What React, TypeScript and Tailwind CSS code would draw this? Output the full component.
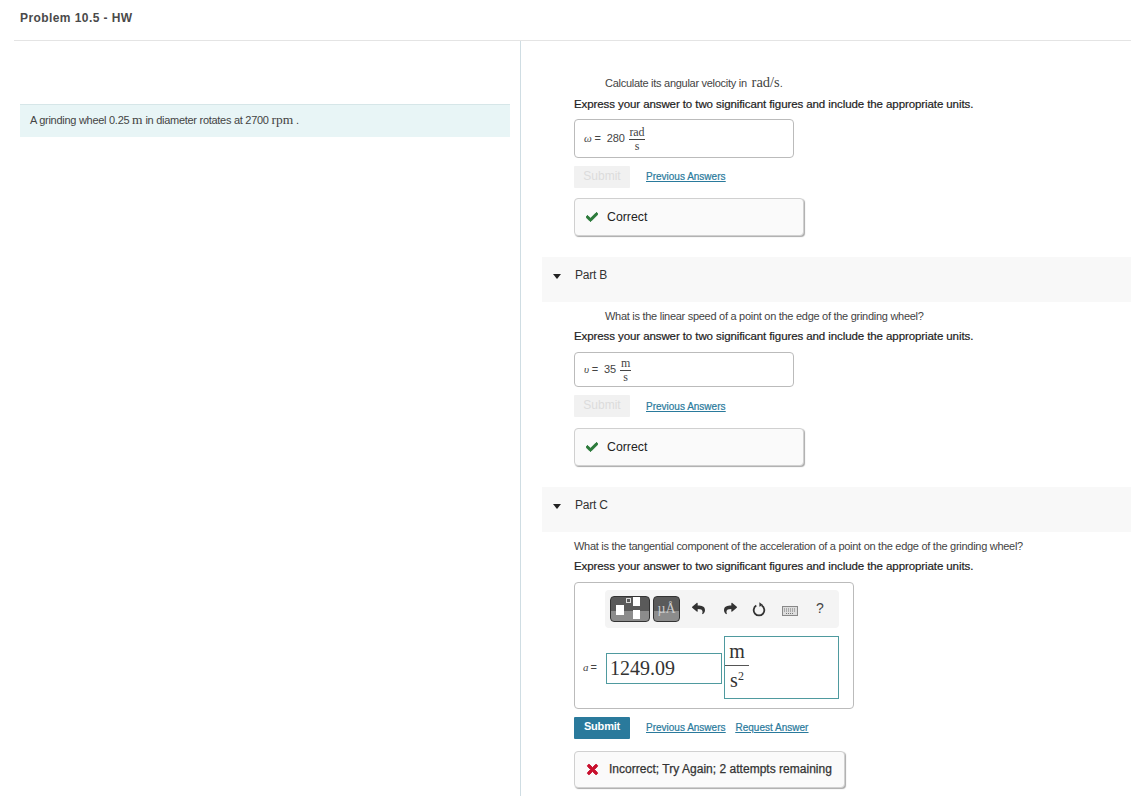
import { FaCheck, FaTimes, FaReply, FaShare } from "react-icons/fa";

const serif = "font-['Liberation_Serif',serif]";
const body = "text-[11px] leading-[16px] tracking-[-0.28px] text-[#444]";

function Fraction({ top, bottom }: { top: string; bottom: string }) {
  return (
    <span className={`inline-flex flex-col items-center text-[12px] leading-[12px] text-[#444] ${serif}`}>
      <span className="border-b border-[#444] px-px pb-px">{top}</span>
      <span>{bottom}</span>
    </span>
  );
}

function Instruction() {
  return <p className="text-[11.5px] leading-[16px] tracking-[-0.09px] text-[#222] [-webkit-text-stroke:0.2px_#222]">Express your answer to two significant figures and include the appropriate units.</p>;
}

function Links({ request, className }: { request?: boolean; className?: string }) {
  return (
    <div className={`flex gap-[10px] pl-[16px] text-[10px] text-[#2a7a9c] underline [-webkit-text-stroke:0.2px_#2a7a9c] ${className ?? ""}`}>
      <a>Previous Answers</a>
      {request && <a>Request Answer</a>}
    </div>
  );
}

function DisabledSubmit() {
  return <div className="w-[56px] h-[22px] bg-[#f1f1f1] text-[#dcdcdc] text-[12px] leading-[21px] text-center rounded-[1px]">Submit</div>;
}

function Feedback({ ok, text, size }: { ok: boolean; text: string; size: string }) {
  return (
    <div className={`${size} flex items-center border border-[#d0d0d0] rounded-[4px] bg-[#fafafa] shadow-[1px_1px_1px_#aaa]`}>
      {ok ? (
        <FaCheck className="ml-[11px] text-[#2b7a3a] text-[12px]" stroke="currentColor" strokeWidth={40} />
      ) : (
        <FaTimes className="ml-[10px] text-[#c8102e] text-[15px]" stroke="currentColor" strokeWidth={30} />
      )}
      <span className={ok ? "ml-[9px] text-[12.3px] text-[#222]" : "ml-[9px] -mt-[2px] text-[12px] tracking-[0.02px] text-[#333] [-webkit-text-stroke:0.25px_#333] whitespace-nowrap"}>{text}</span>
    </div>
  );
}

function PartBar({ name }: { name: string }) {
  return (
    <div className="h-[45px] bg-[#f8f8f8] flex items-start pt-[10px] ml-[21px]">
      <span className="ml-[11px] mt-[7px] w-0 h-0 border-x-[4.5px] border-x-transparent border-t-[5px] border-t-[#222]" />
      <span className="ml-[14px] text-[12px] tracking-[-0.2px] leading-[16px] text-[#333]">{name}</span>
    </div>
  );
}

function Toolbar() {
  return (
    <div className="ml-[30px] w-[234px] h-[38px] bg-[#f4f4f4] rounded-[4px] flex items-center pl-[5px]">
      <div className="relative w-[40px] h-[26px] rounded-[4px] border border-[#333] bg-[linear-gradient(#5a5a5a_0_58%,#8c8c8c_58%)]">
        <span className="absolute left-[5px] top-[8px] w-[8px] h-[10px] bg-white" />
        <span className="absolute left-[15px] top-[1px] w-[5px] h-[5px] border border-[#ddd]" />
        <span className="absolute left-[22px] top-0 w-[7px] h-[9px] bg-white" />
        <span className="absolute left-[22px] top-[13px] w-[7px] h-[9px] bg-white" />
      </div>
      <div className={`ml-[3px] w-[27px] h-[26px] rounded-[4px] border border-[#333] bg-[linear-gradient(#5a5a5a_0_58%,#8c8c8c_58%)] text-[#ccc] text-[14px] leading-[24px] text-center ${serif}`}>µÅ</div>
      <FaReply className="ml-[12px] -mt-[2px] text-[#333] text-[13px]" />
      <FaShare className="ml-[19px] -mt-[2px] text-[#333] text-[13px]" />
      <svg className="ml-[15px]" width="14" height="15" viewBox="0 0 14 15" fill="none">
        <path d="M4.3 3.6a5.3 5.3 0 1 0 5.4 0" stroke="#333" strokeWidth="1.8" />
        <path d="M7.4 0.3l3.6 2.8-3.6 1.6z" fill="#333" />
      </svg>
      <svg className="ml-[16px] mt-[3px]" width="16" height="10" viewBox="0 0 16 10">
        <rect x="0.5" y="0.5" width="15" height="9" fill="#ddd" stroke="#888" />
        <path d="M2 3h12M2 5h12M4 7.5h8" stroke="#777" strokeDasharray="1 1" />
      </svg>
      <span className="ml-[18px] -mt-[2px] text-[#444] text-[14px]">?</span>
    </div>
  );
}

export default function App() {
  return (
    <div className="w-[1131px] h-[796px] overflow-hidden bg-white font-['Liberation_Sans',sans-serif]">
      <div className="h-[41px] ml-[14px] border-b border-[#e4e4e4] pl-[6px] pt-[10px]">
        <h1 className="text-[12px] leading-[16px] font-bold text-[#4a4a4a] tracking-[0.42px]">Problem 10.5 - HW</h1>
      </div>
      <div className="flex h-[755px]">
        <div className="w-[521px] border-r border-[#cfdde3] pt-[63px] pl-[20px] pr-[10px]">
          <div className={`h-[33px] bg-[#e8f5f6] border-t border-[#d6e6e8] pl-[10px] pt-[7px] ${body}`}>
            A grinding wheel 0.25 <span className={`${serif} text-[13.5px] tracking-normal`}>m</span> in diameter rotates at 2700 <span className={`${serif} text-[13.5px] tracking-normal`}>rpm</span> .
          </div>
        </div>
        <div className="flex-1 min-w-0">
          <div className="pl-[53px] pt-[33px]">
            <p className={`pl-[31px] h-[16px] ${body}`}>Calculate its angular velocity in <span className={`${serif} ml-[2px] text-[14.5px] tracking-normal`}>rad/s</span>.</p>
            <div className="mt-[6px]"><Instruction /></div>
            <div className="mt-[7px] w-[220px] h-[39px] border border-[#bbb] rounded-[4px] flex items-center pl-[9px] text-[11px] tracking-[-0.2px] text-[#444]">
              <span className={`${serif} italic mr-[3px]`}>ω</span>= <span className="ml-[6px] mr-[4px]">280</span><Fraction top="rad" bottom="s" />
            </div>
            <div className="mt-[8px] flex items-center"><DisabledSubmit /><Links className="-mt-[2px]" /></div>
            <div className="mt-[10px]"><Feedback ok text="Correct" size="w-[230px] h-[38px]" /></div>
          </div>
          <div className="mt-[21px]"><PartBar name="Part B" /></div>
          <div className="pl-[53px] pt-[6px]">
            <p className={`pl-[31px] ${body}`}>What is the linear speed of a point on the edge of the grinding wheel?</p>
            <div className="mt-[4px]"><Instruction /></div>
            <div className="mt-[8px] w-[220px] h-[35px] border border-[#bbb] rounded-[4px] flex items-center pl-[9px] text-[11px] tracking-[-0.2px] text-[#444]">
              <span className={`${serif} italic mr-[3px]`}>υ</span>= <span className="ml-[6px] mr-[4px]">35</span><Fraction top="m" bottom="s" />
            </div>
            <div className="mt-[8px] flex items-center"><DisabledSubmit /><Links /></div>
            <div className="mt-[11px]"><Feedback ok text="Correct" size="w-[230px] h-[38px]" /></div>
          </div>
          <div className="mt-[21px]"><PartBar name="Part C" /></div>
          <div className="pl-[53px] pt-[6px]">
            <p className={body}>What is the tangential component of the acceleration of a point on the edge of the grinding wheel?</p>
            <div className="mt-[4px]"><Instruction /></div>
            <div className="mt-[8px] w-[280px] h-[127px] border border-[#bbb] rounded-[4px] pt-[7px]">
              <Toolbar />
              <div className="mt-[8px] flex items-center pl-[8px]">
                <span className="w-[23px] text-[11px] text-[#444]"><span className={`${serif} italic`}>a</span><span className="ml-[2px]">=</span></span>
                <div className={`mt-[2px] w-[116px] h-[31px] border border-[#4f9a9f] pl-[3px] text-[20px] leading-[29px] text-[#333] ${serif}`}>1249.09</div>
                <div className={`ml-[2px] w-[115px] h-[63px] border border-[#4f9a9f] ${serif} text-[#333] text-[20px] pt-px`}>
                  <div className="w-[24px] h-[28px] text-center leading-[26px] border-b border-[#555]">m</div>
                  <div className="w-[24px] h-[28px] text-center leading-[20px]">s<span className="text-[12px] align-[7px]">2</span></div>
                </div>
              </div>
            </div>
            <div className="mt-[8px] flex items-center">
              <div className="w-[56px] h-[22px] bg-[#2a7a9c] text-white text-[11px] font-bold tracking-[-0.2px] leading-[19px] text-center rounded-[1px]">Submit</div>
              <Links request className="-mt-[2px]" />
            </div>
            <div className="mt-[12px]"><Feedback ok={false} text="Incorrect; Try Again; 2 attempts remaining" size="w-[271px] h-[37px]" /></div>
          </div>
        </div>
      </div>
    </div>
  );
}
